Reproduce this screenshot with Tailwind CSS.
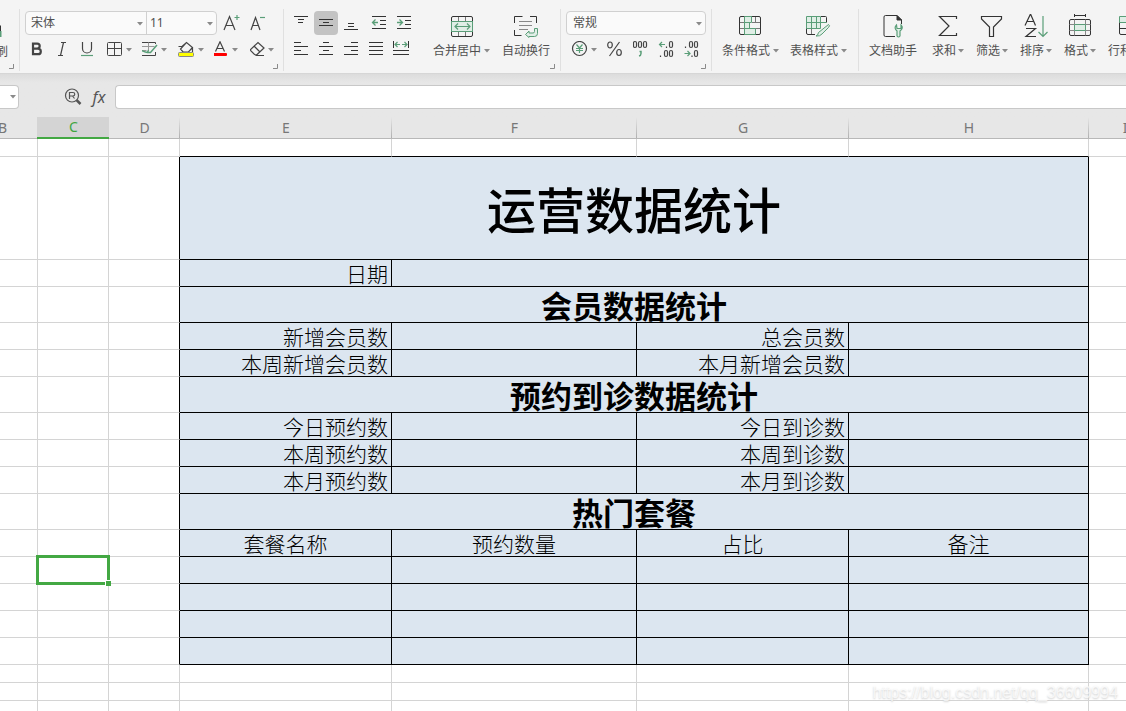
<!DOCTYPE html>
<html lang="zh-CN">
<head>
<meta charset="utf-8">
<title>运营数据统计</title>
<script src="https://cdn.jsdelivr.net/npm/@tailwindcss/browser@4"></script>
</head>
<body class="relative flex h-screen flex-col overflow-hidden bg-white font-['Noto_Sans','Noto_Sans_CJK_SC',sans-serif] text-xs text-[#505050]">
<svg class="hidden">
  <symbol id="caret" viewBox="0 0 6 4"><path d="M0 0h6L3 3.5z" fill="#8a8a8a" stroke="none"/></symbol>
  <symbol id="corner" viewBox="0 0 5 5"><path d="M4.5 0v4.5H0" fill="none" stroke="#8a8a8a"/></symbol>
</svg>

<header class="flex h-[73px] shrink-0 overflow-hidden bg-[#f4f4f4] pt-[9px]">
  <!-- clipboard -->
  <section aria-label="剪贴板" class="relative h-[62px] w-5 shrink-0 overflow-hidden border-r border-[#e0e0e0]">
    <button class="flex h-full w-2 flex-col justify-end overflow-hidden pb-[11px] text-right">
      <svg class="mb-[3px] h-[18px] w-2" viewBox="0 0 8 18"><path d="M0 2.500V13" stroke="#333" stroke-width="2" fill="none"/><path d="M0 14V8" stroke="#5a9e78" stroke-width="3"/></svg>
      <span class="-ml-1 w-3 leading-4">刷</span>
    </button>
    <svg class="absolute bottom-[2px] left-[9px] h-[5px] w-[5px]"><use href="#corner"/></svg>
  </section>

  <!-- font -->
  <section aria-label="字体" class="relative flex h-[62px] w-[264px] shrink-0 flex-col gap-1 border-r border-[#e0e0e0] pt-[2px] pl-[5px]">
    <div class="flex items-center">
      <div class="flex h-6 w-[192px] rounded border border-[#d0d0d0] bg-[#fafafa]">
        <div class="relative w-[121px] border-r border-[#d0d0d0]">
          <select aria-label="字体名称" class="h-full w-full appearance-none bg-transparent pl-[5px] text-xs leading-5 outline-none"><option>宋体</option></select>
          <svg class="pointer-events-none absolute top-[10px] right-[3px] h-1 w-[6px]"><use href="#caret"/></svg>
        </div>
        <div class="relative flex-1">
          <select aria-label="字号" class="h-full w-full appearance-none bg-transparent pl-[3px] text-xs leading-5 outline-none"><option>11</option></select>
          <svg class="pointer-events-none absolute top-[10px] right-[3px] h-1 w-[6px]"><use href="#caret"/></svg>
        </div>
      </div>
      <button aria-label="增大字号" class="ml-[6px]"><svg class="h-5 w-[18px]" viewBox="0 0 18 20" fill="none" stroke="#444" stroke-width="1.200"><path d="M1 17L6.500 3.500L12 17M3 12.500H10"/><path d="M11.500 4.500h5M14 2v5" stroke="#5a9e78"/></svg></button>
      <button aria-label="减小字号" class="ml-[9px]"><svg class="h-5 w-[16px]" viewBox="0 0 16 20" fill="none" stroke="#444" stroke-width="1.200"><path d="M1 17L5.500 4.500L10 17M2.500 12.500H8.500"/><path d="M10 4.500h5" stroke="#5a9e78"/></svg></button>
    </div>
    <div class="-ml-px flex h-5 items-center">
      <button aria-label="加粗" class="flex w-[25px] justify-center"><svg class="h-4 w-4" viewBox="0 0 16 16" fill="none" stroke="#444" stroke-width="2.200"><path d="M4 2.600h4.200a2.300 2.300 0 0 1 0 5H4zM4 7.600h5a2.700 2.700 0 0 1 0 5.600H4z"/></svg></button>
      <button aria-label="倾斜" class="flex w-[25px] justify-center"><svg class="h-4 w-4" viewBox="0 0 16 16" fill="none" stroke="#444" stroke-width="1.200"><path d="M7 1.500h5M4 14.500h5M9.500 1.500L6.500 14.500"/></svg></button>
      <button aria-label="下划线" class="flex w-[25px] justify-center"><svg class="h-4 w-4" viewBox="0 0 16 16" fill="none" stroke="#444" stroke-width="1.200"><path d="M3.500 1v6.500a4.500 4.500 0 0 0 9 0V1"/><path d="M2 14.500h12" stroke="#5a9e78"/></svg></button>
      <div class="ml-[7px] flex gap-2">
        <button aria-label="边框" class="w-7"><svg class="h-4 w-7" viewBox="0 0 28 16" fill="none" stroke="#444"><rect x="1.500" y="1.500" width="14" height="13" rx="1"/><path d="M1.500 7.500h14M8.500 1.500v13"/><use href="#caret" x="20" y="7" width="6" height="4"/></svg></button>
        <button aria-label="绘制边框" class="w-7"><svg class="h-4 w-7" viewBox="0 0 28 16" fill="none" stroke="#444"><path d="M13.500 3V1.500H-.5V5M-.5 11v3.500h14V11"/><path d="M-.5 5.500h13M6.500 1.500v8M-.5 9.500h5" stroke="#999"/><path d="M15 4l-6.500 7.500H5.500l1-2.500M-.5 9.500l4 1.500 2 .5" stroke="#5a9e78" stroke-width="1.500"/><use href="#caret" x="19" y="7" width="6" height="4"/></svg></button>
        <button aria-label="填充颜色" class="w-7"><svg class="h-4 w-7" viewBox="0 0 28 16" fill="none" stroke="#444" stroke-width="1.200"><path d="M.5 5.500H4L8.500 1.500L14.500 6.500L10.500 11H5L2.500 8L7.500 2.500M14.500 6.500v4.500"/><rect x=".5" y="11.500" width="15" height="4" rx="1" fill="#ff0" stroke="#888" stroke-width="1"/><use href="#caret" x="20" y="7" width="6" height="4"/></svg></button>
        <button aria-label="字体颜色" class="w-7"><svg class="h-4 w-7" viewBox="0 0 28 16" fill="none" stroke="#444" stroke-width="1.200"><path d="M1.500 10.500L6 .8L10.500 10.500M3 7.500h6"/><rect x="-1" y="12" width="14" height="3" rx="1" fill="#f00" stroke="none"/><use href="#caret" x="18" y="7" width="6" height="4"/></svg></button>
        <button aria-label="清除" class="w-7"><svg class="h-4 w-7" viewBox="0 0 28 16" fill="none" stroke="#444" stroke-width="1.200"><path d="M0 9L8 1.500L14 7L6.500 14L4.500 13.500zM4.500 5.500L10 11M5.500 14.500H14"/><use href="#caret" x="18" y="7" width="6" height="4"/></svg></button>
      </div>
    </div>
    <svg class="absolute right-[5px] bottom-[2px] h-[5px] w-[5px]"><use href="#corner"/></svg>
  </section>

  <!-- alignment -->
  <section aria-label="对齐方式" class="relative flex h-[62px] w-[277px] shrink-0 border-r border-[#e0e0e0] pt-[2px] pl-[5px]">
    <div class="flex w-[128px] flex-col gap-1">
      <div class="flex h-6 gap-px">
        <button aria-label="顶端对齐" class="h-6 w-6"><svg class="h-6 w-6" viewBox="0 0 24 24" stroke="#333"><path d="M5 5.500h14M9 8.500h6M9 11.500h5"/></svg></button>
        <button aria-label="垂直居中" aria-pressed="true" class="h-6 w-6 rounded bg-[#c3c3c3]"><svg class="h-6 w-6" viewBox="0 0 24 24" stroke="#333"><path d="M5 8.500h14M9 11.500h6M5 14.500h14"/></svg></button>
        <button aria-label="底端对齐" class="h-6 w-6"><svg class="h-6 w-6" viewBox="0 0 24 24" stroke="#333"><path d="M9 12.500h6M9 15.500h6M5 18.500h14"/></svg></button>
        <button aria-label="减少缩进" class="ml-[3px] h-6 w-6"><svg class="h-6 w-6" viewBox="0 0 24 24" fill="none" stroke="#333"><path d="M5 5.500h14M13 9.500h6M13 13.500h6M5 17.500h14"/><path d="M11 11.500H5.500M8.500 8.500l-3 3 3 3" stroke="#5a9e78" stroke-width="1.300"/></svg></button>
        <button aria-label="增加缩进" class="h-6 w-6"><svg class="h-6 w-6" viewBox="0 0 24 24" fill="none" stroke="#333"><path d="M5 5.500h14M13 9.500h6M13 13.500h6M5 17.500h14"/><path d="M5 11.500h5.500M7.500 8.500l3 3-3 3" stroke="#5a9e78" stroke-width="1.300"/></svg></button>
      </div>
      <div class="flex h-5 gap-px">
        <button aria-label="左对齐" class="h-5 w-6"><svg class="h-5 w-6" viewBox="0 0 24 20" stroke="#333"><path d="M5 3.500h7M5 7.500h14M5 11.500h7M5 15.500h14"/></svg></button>
        <button aria-label="水平居中" class="h-5 w-6"><svg class="h-5 w-6" viewBox="0 0 24 20" stroke="#333"><path d="M9 3.500h6M5 7.500h14M9 11.500h6M5 15.500h14"/></svg></button>
        <button aria-label="右对齐" class="h-5 w-6"><svg class="h-5 w-6" viewBox="0 0 24 20" stroke="#333"><path d="M12 3.500h7M5 7.500h14M12 11.500h7M5 15.500h14"/></svg></button>
        <button aria-label="两端对齐" class="h-5 w-6"><svg class="h-5 w-6" viewBox="0 0 24 20" stroke="#333"><path d="M5 3.500h14M5 7.500h14M5 11.500h14M5 15.500h14"/></svg></button>
        <button aria-label="分散对齐" class="h-5 w-6"><svg class="h-5 w-6" viewBox="0 0 24 20" fill="none" stroke="#333"><path d="M4.500 2v7M19.500 2v7M4 11.500h16M4 15.500h16"/><path d="M6 5.500h5M13 5.500h5M8.500 3L6 5.500 8.500 8M15.500 3L18 5.500 15.500 8" stroke="#5a9e78" stroke-width="1.200"/></svg></button>
      </div>
    </div>
    <div class="ml-4 flex items-start gap-3">
      <button class="flex flex-col items-center gap-[5px] pt-[3px]">
        <svg class="h-6 w-6" viewBox="0 0 24 24" fill="none" stroke="#333"><rect x="1.500" y="2.500" width="21" height="20" rx="1.500"/><path d="M8.500 3v5M15.500 3v5M8.500 17v5M15.500 17v5" stroke="#777"/><rect x="1.500" y="7.500" width="21" height="10" fill="#e0eee6" stroke="#5a9e78"/><path d="M5 12.500h15M8 9.500l-3 3 3 3M17 9.500l3 3-3 3" stroke="#5a9e78" stroke-width="1.200"/></svg>
        <span class="flex items-center gap-[3px] leading-4">合并居中<svg class="h-1 w-[6px]"><use href="#caret"/></svg></span>
      </button>
      <button class="flex flex-col items-center gap-[5px] pt-[3px]">
        <svg class="h-6 w-[26px]" viewBox="0 0 26 24" fill="none" stroke="#333"><path d="M9.500 2.500H1.500V9M17 2.500H23.500V9M1.500 16v5.500h7"/><path d="M6 7.500h13M6 11.500h13M6 15.500h9" stroke="#888"/><path d="M21.500 14.500h3v5q0 3-3 3H16v1L12.500 20.500L16 17v2h4q1.500 0 1.500-1.500z" fill="#e0eee6" stroke="#5a9e78"/></svg>
        <span class="leading-4">自动换行</span>
      </button>
    </div>
    <svg class="absolute right-[5px] bottom-[2px] h-[5px] w-[5px]"><use href="#corner"/></svg>
  </section>

  <!-- number -->
  <section aria-label="数字" class="relative flex h-[62px] w-[151px] shrink-0 flex-col gap-1 border-r border-[#e0e0e0] pt-[2px] pl-[5px]">
    <div class="relative h-6 w-[140px] rounded border border-[#d0d0d0] bg-[#fafafa]">
      <select aria-label="数字格式" class="h-full w-full appearance-none bg-transparent pl-[6px] text-xs leading-5 outline-none"><option>常规</option></select>
      <svg class="pointer-events-none absolute top-[10px] right-[3px] h-1 w-[6px]"><use href="#caret"/></svg>
    </div>
    <div class="flex h-5 items-center justify-between pr-[11px] pl-[5px]">
      <button aria-label="货币"><svg class="h-4 w-[26px]" viewBox="0 0 26 16" fill="none" stroke="#444" stroke-width="1.200"><circle cx="8.500" cy="7.500" r="7"/><path d="M5.500 3.500l3 3.500 3-3.500M8.500 7v5M5 7.500h7M5 9.500h7" stroke="#5a9e78"/><use href="#caret" x="20" y="7" width="6" height="4"/></svg></button>
      <button aria-label="百分比"><svg class="h-4 w-4" viewBox="0 0 16 16" fill="none" stroke="#444" stroke-width="1.200"><ellipse cx="3" cy="4" rx="2.300" ry="3"/><ellipse cx="12" cy="11.500" rx="2.300" ry="3"/><path d="M12.500 1L2.500 15"/></svg></button>
      <button aria-label="千位分隔"><svg class="h-[18px] w-4" viewBox="0 0 16 18" fill="none" stroke="#444" stroke-width="1.200"><rect x=".5" y="1.500" width="3" height="6" rx="1.500"/><rect x="5.500" y="1.500" width="3" height="6" rx="1.500"/><rect x="10.500" y="1.500" width="3" height="6" rx="1.500"/><path d="M6.500 11.500h1.500v2q0 2-2 2.500" stroke="#5a9e78" stroke-width="1.500"/></svg></button>
      <button aria-label="增加小数位"><svg class="h-[18px] w-4" viewBox="0 0 16 18" fill="none" stroke="#444" stroke-width="1.200"><rect x="11.500" y="1.500" width="3" height="6" rx="1.500"/><rect x="6.500" y="10.500" width="3" height="6" rx="1.500"/><rect x="11.500" y="10.500" width="3" height="6" rx="1.500"/><path d="M8.500 6.500v1.500M2.500 15.500v1.500"/><path d="M7 4.500H1.500M4 2L1.500 4.500 4 7" stroke="#5a9e78"/></svg></button>
      <button aria-label="减少小数位"><svg class="h-[18px] w-4" viewBox="0 0 16 18" fill="none" stroke="#444" stroke-width="1.200"><rect x="5.500" y="1.500" width="3" height="6" rx="1.500"/><rect x="10.500" y="1.500" width="3" height="6" rx="1.500"/><rect x="10.500" y="10.500" width="3" height="6" rx="1.500"/><path d="M1.500 6.500v1.500M8 15.500v1.500"/><path d="M.5 13.500H6M3.500 11L6 13.500 3.500 16" stroke="#5a9e78"/></svg></button>
    </div>
    <svg class="absolute right-[5px] bottom-[2px] h-[5px] w-[5px]"><use href="#corner"/></svg>
  </section>

  <!-- styles -->
  <section aria-label="样式" class="flex h-[62px] w-[147px] shrink-0 items-start gap-[11px] border-r border-[#e0e0e0] pt-[5px] pl-[10px]">
    <button class="flex flex-col items-center gap-[5px]">
      <svg class="h-6 w-6" viewBox="0 0 24 24" fill="none" stroke="#333"><rect x=".5" y="2.500" width="21" height="18" rx="1.500"/><path d="M1 8.500h5M11 14.500H1M13 8.500h8M11 14.500h10M16.500 3v5M6 20v-6" stroke="#777"/><path d="M5.500 2.500h7v6h-7zM5.500 8.500h5v6h-5zM5.500 14.500h11v6h-11z" fill="#e0eee6" stroke="#5a9e78"/></svg>
      <span class="flex items-center gap-[3px] leading-4">条件格式<svg class="h-1 w-[6px]"><use href="#caret"/></svg></span>
    </button>
    <button class="flex flex-col items-center gap-[5px]">
      <svg class="h-6 w-[26px]" viewBox="0 0 26 24" fill="none" stroke="#333"><path d="M15 2.500h4.500q1 0 1 1v5M.5 14v5q0 1.500 1.500 1.500h7"/><path d="M5.500 15v5M1 14.500h9" stroke="#777"/><path d="M.5 2.500h14v12H.5zM5.500 2.500v12M10.500 2.500v12M.5 8.500h20" fill="#e0eee6" stroke="#5a9e78"/><path d="M22.500 10.500q2 1 0 3L16 20q-2 2.500-6 2 2-.5 2.500-3.500z" fill="#e0eee6" stroke="#5a9e78"/></svg>
      <span class="flex items-center gap-[3px] leading-4">表格样式<svg class="h-1 w-[6px]"><use href="#caret"/></svg></span>
    </button>
  </section>

  <!-- editing -->
  <section aria-label="编辑" class="flex h-[62px] min-w-0 flex-1 items-start gap-3 overflow-hidden pt-[5px] pl-[10px] whitespace-nowrap">
    <button class="mr-[3px] flex shrink-0 flex-col items-center gap-[5px]">
      <svg class="h-6 w-6" viewBox="0 0 24 24" fill="none" stroke="#333"><path d="M14 22.500H4.500q-1.500 0-1.500-1.500V3q0-1.500 1.500-1.500H16L20.500 6v4"/><path d="M16 1.500L20.500 6H16z" fill="#333"/><path d="M15.500 11q-3 3 .5 6v5q1.500 2 3 0v-5q4-3 1-6v3.500h-4z" fill="#e0eee6" stroke="#5a9e78" stroke-width="1.200"/></svg>
      <span class="leading-4">文档助手</span>
    </button>
    <button class="flex w-8 shrink-0 flex-col items-center gap-[5px]">
      <svg class="h-6 w-6" viewBox="0 0 24 24" fill="none" stroke="#333" stroke-width="1.200"><path d="M20.500 5V2.500H3.500L13 12L3.500 21.500H20.500V19"/></svg>
      <span class="flex items-center gap-[2px] leading-4">求和<svg class="h-1 w-[6px]"><use href="#caret"/></svg></span>
    </button>
    <button class="flex w-8 shrink-0 flex-col items-center gap-[5px]">
      <svg class="h-6 w-6" viewBox="0 0 24 24" fill="none" stroke="#333" stroke-width="1.200"><path d="M1.500 2.500h20v2.500l-8 8V22.500h-4V13l-8-8z"/></svg>
      <span class="flex items-center gap-[2px] leading-4">筛选<svg class="h-1 w-[6px]"><use href="#caret"/></svg></span>
    </button>
    <button class="flex w-8 shrink-0 flex-col items-center gap-[5px]">
      <svg class="h-6 w-6" viewBox="0 0 24 24" fill="none" stroke="#333" stroke-width="1.200"><path d="M1 11.500L6.500 0L11.500 11.500M3 7.500h7M2 14.500h9.500L2 22.500h10"/><path d="M19 2v20.500M14.500 18l4.500 4.500L23.500 18" stroke="#5a9e78"/></svg>
      <span class="flex items-center gap-[2px] leading-4">排序<svg class="h-1 w-[6px]"><use href="#caret"/></svg></span>
    </button>
    <button class="flex w-8 shrink-0 flex-col items-center gap-[5px]">
      <svg class="h-6 w-6" viewBox="0 0 24 24" fill="none" stroke="#333"><path d="M6.500 0v3M17.500 0v3M6.500 1.500h11"/><rect x="1.500" y="5.500" width="21" height="16" rx="1.500"/><path d="M6.500 5.500v16M17.500 5.500v16M1.500 10.500h21M1.500 16.500h21" stroke="#888"/><path d="M6.500 10.500h11v6h-11z" fill="#e0eee6" stroke="#5a9e78"/></svg>
      <span class="flex items-center gap-[2px] leading-4">格式<svg class="h-1 w-[6px]"><use href="#caret"/></svg></span>
    </button>
    <button class="flex shrink-0 flex-col items-start gap-[5px]">
      <svg class="ml-[10px] h-6 w-6" viewBox="0 0 24 24" fill="none" stroke="#333"><path d="M1.500 8v11q0 1.500 1.500 1.500h18q1.500 0 1.500-1.500V8M1.500 14.500h21M8.500 8v12"/><path d="M1.500 2.500h21v6h-21z" fill="#e0eee6" stroke="#5a9e78"/></svg>
      <span class="leading-4">行和列</span>
    </button>
  </section>
</header>

<!-- formula bar -->
<div class="flex h-11 shrink-0 items-center border-t border-[#d6d6d6] bg-linear-to-b from-[#dcdcdc] to-[#e7e7e7] to-20% pt-1 pb-px">
  <button aria-label="名称框" class="flex h-6 w-[19px] items-center justify-end rounded-r border border-l-0 border-[#c8c8c8] bg-white pr-[2px]"><svg class="h-1 w-[6px]"><use href="#caret"/></svg></button>
  <button aria-label="查找" class="ml-[45px]"><svg class="h-[18px] w-[18px]" viewBox="0 0 18 18" fill="none" stroke="#555" stroke-width="1.200"><circle cx="8" cy="7.500" r="6.500"/><path d="M5.500 11V4.500h3.500a1.700 1.700 0 0 1 0 3.500H5.500M8.500 8l2 2.500"/><path d="M12.500 12l4 4" stroke-width="2.500"/></svg></button>
  <button aria-label="插入函数" class="ml-[9px] w-4 font-['Noto_Sans',sans-serif] text-base leading-5 text-[#555] italic">fx</button>
  <input aria-label="编辑栏" type="text" class="ml-2 h-6 min-w-0 flex-1 rounded-l border border-r-0 border-[#c8c8c8] bg-white px-2 outline-none">
</div>

<!-- sheet -->
<main class="min-h-0 flex-1 overflow-hidden bg-white">
  <table class="-ml-[33px] w-[calc(100%+68px)] table-fixed border-separate border-spacing-0 font-['Noto_Sans_CJK_SC',sans-serif] text-[21px] leading-[26px] font-light text-black [&_td]:border-r [&_td]:border-b [&_td]:border-[#d4d4d4] [&_td]:p-0 [&_.k]:border-black [&_.k]:bg-[#dce6f0] [&_.kr]:border-r-black [&_.kb]:border-b-black [&_.r]:pr-[3px] [&_.r]:text-right [&_.c]:text-center [&_.h]:text-center [&_.h]:text-[31px] [&_.h]:leading-[35px] [&_.h]:font-bold">
    <colgroup><col class="w-[71px]"><col class="w-[71px]"><col class="w-[71px]"><col class="w-[212px]"><col class="w-[245px]"><col class="w-[212px]"><col class="w-[240px]"><col></colgroup>
    <thead class="font-['Noto_Sans',sans-serif] text-sm leading-5 text-[#777] [&_th]:h-[22px] [&_th]:border-b [&_th]:border-[#b8b8b8] [&_th]:bg-[#e7e7e7] [&_th]:bg-linear-to-b [&_th]:from-[#e7e7e7] [&_th]:to-[#b0b0b0] [&_th]:bg-[length:1px_100%] [&_th]:bg-right [&_th]:bg-no-repeat [&_th]:p-0 [&_th]:font-normal">
      <tr><th>B</th><th class="relative text-[#3fa53f]"><span class="absolute inset-y-0 -left-px right-0 -bottom-px border-b-2 border-[#43a843] bg-[#d4d4d4] pl-px">C</span></th><th>D</th><th>E</th><th>F</th><th>G</th><th>H</th><th>I</th></tr>
    </thead>
    <tbody>
      <tr class="h-[18px]"><td></td><td></td><td></td><td class="kb"></td><td class="kb"></td><td class="kb"></td><td class="kb"></td><td></td></tr>
      <tr class="h-[103px]"><td></td><td></td><td class="kr"></td><td colspan="4" class="k text-center text-[49px] leading-[72px] font-medium"><h1>运营数据统计</h1></td><td></td></tr>
      <tr class="h-[27px]"><td></td><td></td><td class="kr"></td><td class="k r">日期</td><td colspan="3" class="k"></td><td></td></tr>
      <tr class="h-9"><td></td><td></td><td class="kr"></td><td colspan="4" class="k h">会员数据统计</td><td></td></tr>
      <tr class="h-[27px]"><td></td><td></td><td class="kr"></td><td class="k r">新增会员数</td><td class="k"></td><td class="k r">总会员数</td><td class="k"></td><td></td></tr>
      <tr class="h-[27px]"><td></td><td></td><td class="kr"></td><td class="k r">本周新增会员数</td><td class="k"></td><td class="k r">本月新增会员数</td><td class="k"></td><td></td></tr>
      <tr class="h-9"><td></td><td></td><td class="kr"></td><td colspan="4" class="k h">预约到诊数据统计</td><td></td></tr>
      <tr class="h-[27px]"><td></td><td></td><td class="kr"></td><td class="k r">今日预约数</td><td class="k"></td><td class="k r">今日到诊数</td><td class="k"></td><td></td></tr>
      <tr class="h-[27px]"><td></td><td></td><td class="kr"></td><td class="k r">本周预约数</td><td class="k"></td><td class="k r">本周到诊数</td><td class="k"></td><td></td></tr>
      <tr class="h-[27px]"><td></td><td></td><td class="kr"></td><td class="k r">本月预约数</td><td class="k"></td><td class="k r">本月到诊数</td><td class="k"></td><td></td></tr>
      <tr class="h-9"><td></td><td></td><td class="kr"></td><td colspan="4" class="k h">热门套餐</td><td></td></tr>
      <tr class="h-[27px]"><td></td><td></td><td class="kr"></td><td class="k c">套餐名称</td><td class="k c">预约数量</td><td class="k c">占比</td><td class="k c">备注</td><td></td></tr>
      <tr class="h-[27px]"><td></td><td class="relative"><div class="absolute -inset-[2px] border-3 border-[#43a843]"></div><div class="absolute -right-[3px] -bottom-[3px] h-[6px] w-[6px] border-t border-l border-white bg-[#43a843]"></div></td><td class="kr"></td><td class="k"></td><td class="k"></td><td class="k"></td><td class="k"></td><td></td></tr>
      <tr class="h-[27px]"><td></td><td></td><td class="kr"></td><td class="k"></td><td class="k"></td><td class="k"></td><td class="k"></td><td></td></tr>
      <tr class="h-[27px]"><td></td><td></td><td class="kr"></td><td class="k"></td><td class="k"></td><td class="k"></td><td class="k"></td><td></td></tr>
      <tr class="h-[27px]"><td></td><td></td><td class="kr"></td><td class="k"></td><td class="k"></td><td class="k"></td><td class="k"></td><td></td></tr>
      <tr class="h-[18px]"><td></td><td></td><td></td><td></td><td></td><td></td><td></td><td></td></tr>
      <tr class="h-[18px]"><td></td><td></td><td></td><td></td><td></td><td></td><td></td><td></td></tr>
      <tr class="h-[18px]"><td></td><td></td><td></td><td></td><td></td><td></td><td></td><td></td></tr>
    </tbody>
  </table>
</main>
<div class="pointer-events-none absolute right-2 bottom-2 font-['Liberation_Sans',sans-serif] text-base leading-5 text-white/70 [text-shadow:0_1px_2px_#ccc]">https://blog.csdn.net/qq_36609994</div>
</body>
</html>
